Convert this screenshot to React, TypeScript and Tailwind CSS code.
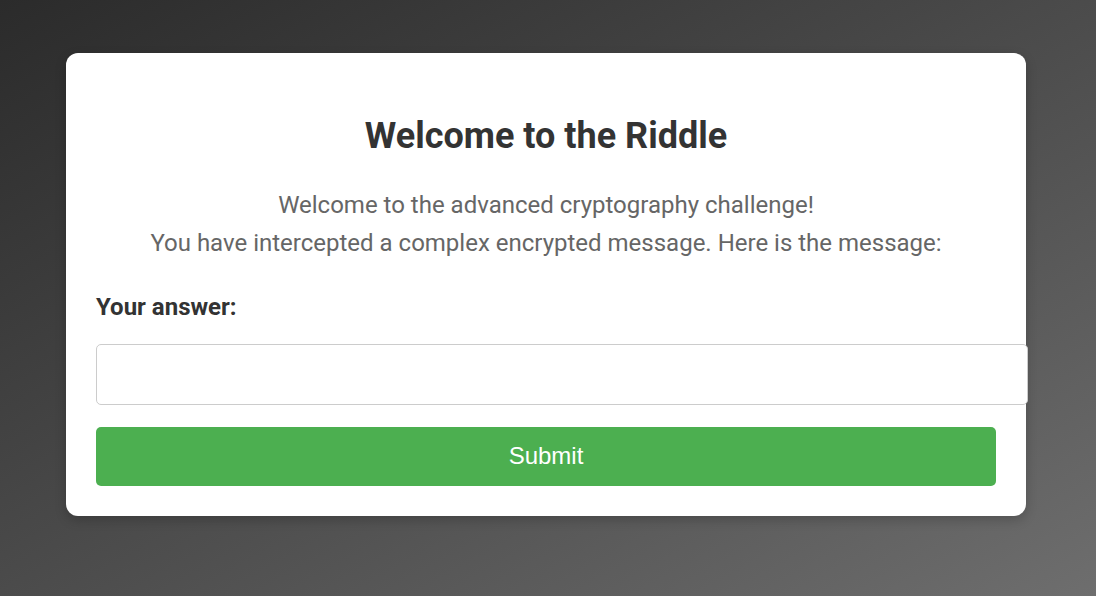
export default function App() {
  return (
    <div className="min-h-screen w-full bg-gradient-to-br from-[#2b2b2b] to-[#6e6e6e] pt-[53px] pl-[66px] font-['Roboto',sans-serif]">
      {/* Riddle card */}
      <div className="w-[960px] rounded-xl bg-white p-[30px] shadow-[0_4px_12px_rgba(0,0,0,0.2)]">
        <h1 className="mt-[31px] text-center text-[36px] font-bold leading-[44px] text-[#333]">
          Welcome to the Riddle
        </h1>
        <div className="mt-[28px] text-center text-[24px] leading-[1.6] text-[#666]">
          <p>Welcome to the advanced cryptography challenge!</p>
          <p>You have intercepted a complex encrypted message. Here is the message:</p>
        </div>

        <form className="mt-[29px]" onSubmit={(e) => e.preventDefault()}>
          <label htmlFor="answer" className="block text-[24px] font-bold leading-[30px] text-[#333]">
            Your answer:
          </label>
          <input
            id="answer"
            type="text"
            className="mt-[22px] block h-[61px] w-[932px] rounded-[5px] border border-[#ccc] bg-white px-[15px] text-[16px] outline-none"
          />
          <button
            type="submit"
            className="mt-[22px] flex h-[59px] w-full items-center justify-center rounded-[5px] bg-[#4caf50] font-['Liberation_Sans',sans-serif] text-[24px] text-white"
          >
            Submit
          </button>
        </form>
      </div>
    </div>
  );
}
